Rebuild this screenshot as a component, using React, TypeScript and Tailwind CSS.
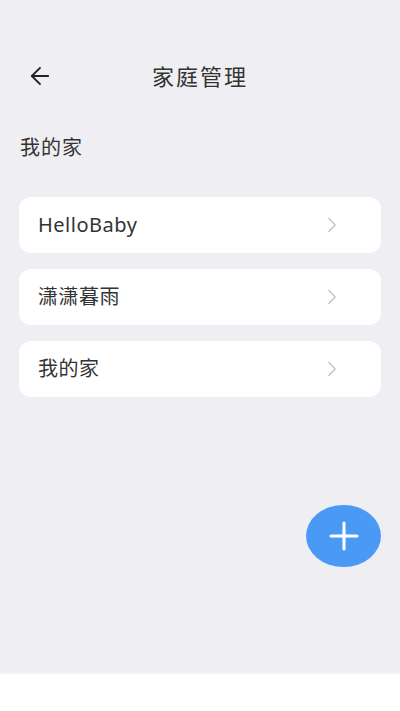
import { ArrowLeft, ChevronRight } from 'lucide-react'

const families = ['HelloBaby', '潇潇暮雨', '我的家']

export default function App() {
  return (
    <div
      className="w-[400px] h-[711px] flex flex-col bg-white"
      style={{ fontFamily: '"Noto Sans", "Noto Sans CJK SC", sans-serif' }}
    >
      <div className="h-[673px] bg-[#efeef3] flex flex-col">
        <div className="relative h-[52px] mt-[50px] flex items-center justify-center">
          <ArrowLeft className="absolute left-[26px] w-[28px] h-[28px] text-[#222]" strokeWidth={1.6} />
          <h1 className="text-[22px] text-[#333] tracking-[2px]">家庭管理</h1>
        </div>

        <p className="mt-[31px] px-[20px] text-[20px] text-[#333] leading-[30px] tracking-[1px]">我的家</p>

        <div className="mt-[34px] px-[19px] flex flex-col gap-[16px]">
          {families.map((name) => (
            <div
              key={name}
              className="h-[56px] bg-white rounded-[12px] flex items-center justify-between pl-[19px] pr-[36px]"
            >
              <span className="text-[20px] text-[#333] tracking-[0.5px]">{name}</span>
              <ChevronRight className="w-[26px] h-[26px] text-[#bdbdbd]" strokeWidth={1} />
            </div>
          ))}
        </div>

        <div className="flex justify-end pr-[19px] mt-[108px]">
          <button className="w-[75px] h-[62px] rounded-[50%] bg-[#4a9af5] flex items-center justify-center">
            <svg width="30" height="30" viewBox="0 0 30 30" fill="none">
              <path d="M15 2v26M2 15h26" stroke="white" strokeWidth="3" strokeLinecap="round" />
            </svg>
          </button>
        </div>
      </div>
      <div className="h-px bg-[#f5f5f5]" />
    </div>
  )
}
